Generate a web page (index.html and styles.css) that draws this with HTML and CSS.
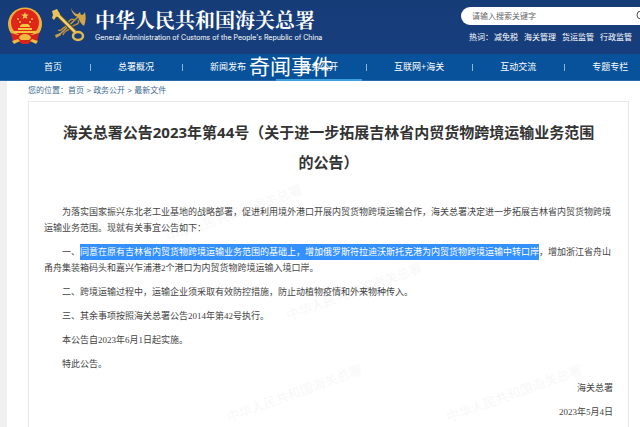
FILE: index.html
```html
<!DOCTYPE html>
<html lang="zh-CN">
<head>
    <meta charset="UTF-8">
    <meta name="viewport" content="width=device-width, initial-scale=1.0">
    <title>海关总署公告2023年第44号</title>
    <link rel="stylesheet" href="styles.css">
</head>
<body>
    <header class="site-header">
        <div class="masthead">
            <a class="brand" href="#">
                <!-- national emblem -->
                <svg class="emblem" viewBox="0 0 36 38" aria-hidden="true">
                    <ellipse cx="18" cy="17" rx="17" ry="16.5" fill="#e9b43c"/>
                    <ellipse cx="18" cy="15.5" rx="14" ry="13.5" fill="#e0251b"/>
                    <path d="M18 5l1 2.6h2.8l-2.2 1.7.8 2.7-2.4-1.6-2.4 1.6.8-2.7-2.2-1.7H17z" fill="#f7d048"/>
                    <g fill="#f3c63e">
                        <circle cx="11" cy="12" r="1"/>
                        <circle cx="13" cy="15" r="1"/>
                        <circle cx="23" cy="15" r="1"/>
                        <circle cx="25" cy="12" r="1"/>
                        <path d="M13 19l2-2h6l2 2v1H13zM11 21h14v2H11zM7 24h22v2H7z"/>
                    </g>
                    <path d="M4 26l7 2h14l7-2-2 9-5-1-4 3h-6l-4-3-5 1z" fill="#d8231a"/>
                    <path d="M12 31a6 4 0 0 1 12 0l-2 2h-8zM5 34l6-2 2 2-6 3zM31 34l-6-2-2 2 6 3z" fill="#eebc3f"/>
                </svg>
                <!-- key and caduceus -->
                <svg class="customs-mark" viewBox="0 0 36 36" aria-hidden="true">
                    <path d="M28 8L7 28" stroke="#c9a045" stroke-width="1.5"/>
                    <path d="M24 12c-7-3-6 5-10 7s-4 5-7 3M27 12c3 5-5 4-8 8s-6 2-7 7" fill="none" stroke="#b98c35" stroke-width="1.5"/>
                    <path d="M20 0c1 5 3 8 7 9 1 3 3 7 6 9 2-5 2-9 1-14-1 2-2 3-4 3l-1-3-2 2c-3 0-5-2-7-6z" fill="#d2a548"/>
                    <path d="M4 27l5-2 1 2-5 3z" fill="#c9a045"/>
                    <path d="M5 5l19 19" stroke="#5e4b1e" stroke-width="5"/>
                    <path d="M4 4l20 20" stroke="#efd277" stroke-width="2.5"/>
                    <path d="M1 3l5-2 3 5-1 2-3 1-2 3-2-2 1-3z" fill="#e8c55c"/>
                    <ellipse cx="27" cy="28" rx="5" ry="4" fill="none" stroke="#e0b84e" stroke-width="2.5"/>
                </svg>
                <span class="brand-text">
                    <span class="brand-name">中华人民共和国海关总署</span>
                    <span class="brand-english">General Administration of Customs of the People's Republic of China</span>
                </span>
            </a>
            <form class="search">
                <div class="search-box">
                    <input class="search-input" type="text" aria-label="搜索" placeholder="请输入搜索关键字">
                    <button class="search-btn" type="button" aria-label="搜索">
                        <svg viewBox="0 0 12 12"><circle cx="5" cy="5" r="4"/><path d="M8 8l3 3"/></svg>
                    </button>
                </div>
                <div class="hot-words">
                    <span class="hot-label">热词&#xFF1A;</span>
                    <a href="#">减免税</a>
                    <a href="#">海关管理</a>
                    <a href="#">货运监管</a>
                    <a href="#">行政监管</a>
                </div>
            </form>
        </div>
        <nav class="main-nav">
            <a href="#">首页</a>
            <a href="#">总署概况</a>
            <a href="#">新闻发布</a>
            <a class="active" href="#">政务公开<span class="caption">奇闻事件</span></a>
            <a href="#">互联网+海关</a>
            <a href="#">互动交流</a>
            <a href="#">专题专栏</a>
        </nav>
    </header>

    <main class="page">
        <div class="breadcrumb">您的位置&#xFF1A;<a href="#">首页</a> &gt; <a href="#">政务公开</a> &gt; <a href="#">最新文件</a></div>

        <article class="notice">
            <h1 class="notice-title">海关总署公告2023年第44号&#xFF08;关于进一步拓展吉林省内贸货物跨境运输业务范围的公告&#xFF09;</h1>
            <div class="notice-body">
                <p>为落实国家振兴东北老工业基地的战略部署&#xFF0C;促进利用境外港口开展内贸货物跨境运输合作&#xFF0C;海关总署决定进一步拓展吉林省内贸货物跨境运输业务范围。现就有关事宜公告如下&#xFF1A;</p>
                <p>一、<mark>同意在原有吉林省内贸货物跨境运输业务范围的基础上&#xFF0C;增加俄罗斯符拉迪沃斯托克港为内贸货物跨境运输中转口岸</mark>&#xFF0C;增加浙江省舟山甬舟集装箱码头和嘉兴乍浦港2个港口为内贸货物跨境运输入境口岸。</p>
                <p>二、跨境运输过程中&#xFF0C;运输企业须采取有效防控措施&#xFF0C;防止动植物疫情和外来物种传入。</p>
                <p>三、其余事项按照海关总署公告2014年第42号执行。</p>
                <p>本公告自2023年6月1日起实施。</p>
                <p>特此公告。</p>
                <p class="sign">海关总署</p>
                <p class="sign">2023年5月4日</p>
            </div>
            <span class="watermark wm-1" aria-hidden="true">中华人民共和国海关总署</span>
            <span class="watermark wm-2" aria-hidden="true">中华人民共和国海关总署</span>
            <span class="watermark wm-3" aria-hidden="true">中华人民共和国海关总署</span>
            <span class="watermark wm-4" aria-hidden="true">中华人民共和国海关总署</span>
        </article>
    </main>
</body>
</html>
```
FILE: styles.css
```css
* {
    margin: 0;
    padding: 0;
    box-sizing: border-box;
}

body {
    display: flex;
    flex-direction: column;
    min-height: 100vh;
    background: #fff;
    font-family: "Liberation Sans", "Noto Sans CJK SC", sans-serif;
    font-size: 9px;
    color: #444;
}

a {
    color: inherit;
    text-decoration: none;
}

.site-header {
    background: linear-gradient(#163c78, #18407f);
    color: #fff;
    overflow: hidden;
}

.masthead {
    display: flex;
    justify-content: space-between;
    height: 54px;
    padding-left: 7px;
}

.brand {
    display: flex;
    align-items: flex-start;
    padding-top: 7px;
}

.emblem {
    width: 36px;
    height: 38px;
}

.customs-mark {
    width: 36px;
    height: 36px;
    margin: 1px 8px 0;
}

.brand-text {
    display: flex;
    flex-direction: column;
    white-space: nowrap;
}

.brand-name {
    font-family: "Noto Serif CJK SC", "Noto Sans CJK SC", serif;
    font-size: 20px;
    font-weight: bold;
    line-height: 26px;
}

.brand-english {
    font-family: Inter, "Liberation Sans", sans-serif;
    font-size: 7px;
    line-height: 10px;
}

.search {
    flex: none;
    width: 179px;
    padding-top: 7px;
}

.search-box {
    display: flex;
    align-items: center;
    height: 18px;
    margin-right: -12px;
    padding-left: 11px;
    background: #fff;
    border-radius: 9px;
}

.search-input {
    flex: 1;
    min-width: 0;
    border: 0;
    outline: 0;
    background: none;
    font: inherit;
    font-size: 8px;
}

.search-input::placeholder {
    color: #666;
}

.search-btn {
    width: 16px;
    height: 12px;
    border: 0;
    background: none;
}

.search-btn svg {
    display: block;
    width: 12px;
    height: 12px;
    fill: none;
    stroke: #555;
}

.hot-words {
    display: flex;
    gap: 6px;
    margin-top: 7px;
    padding-left: 8px;
    font-size: 8px;
    line-height: 12px;
    white-space: nowrap;
}

.hot-label {
    width: 19px;
}

.main-nav {
    display: flex;
    height: 27px;
    padding-left: 16px;
    background: #07529a;
    border-bottom: 1px solid #2a6cab;
}

.main-nav a {
    position: relative;
    padding: 0 28px;
    line-height: 26px;
    white-space: nowrap;
}

.main-nav a + a::before {
    content: "";
    position: absolute;
    left: 0;
    top: 10px;
    width: 1px;
    height: 7px;
    background: #8fb4d8;
}

.main-nav .active::before {
    display: none;
}

.main-nav .active::after {
    content: "";
    position: absolute;
    left: 2px;
    right: 4px;
    bottom: -1px;
    height: 2px;
    background: #3fa0e0;
}

/* large caption laid over the active tab */
.caption {
    position: absolute;
    left: -25px;
    top: 0;
    font-size: 21px;
}

.page {
    display: flex;
    flex-direction: column;
    flex: 1;
    padding: 0 11px 0 21px;
    border-left: 7px solid #f0f0f0;
}

.breadcrumb {
    padding: 4px 0;
    font-size: 8px;
    line-height: 12px;
    color: #3c6a91;
}

.notice {
    position: relative;
    z-index: 0;
    flex: 1;
    overflow: hidden;
    border: 1px solid #e8e8e8;
    border-bottom: 0;
    padding: 15px 15px 0;
}

.notice-title {
    padding: 0 14px;
    font-family: "Open Sans", "Noto Sans CJK SC", sans-serif;
    font-size: 15px;
    line-height: 30px;
    text-align: center;
    color: #333;
}

.notice-body {
    margin-top: 27px;
    font-family: "Liberation Serif", "Noto Sans CJK SC", serif;
    line-height: 16px;
}

.notice-body p {
    margin-bottom: 8px;
    text-indent: 2em;
}

.notice-body p:last-child {
    margin-bottom: 0;
}

.notice-body mark {
    padding: 3px 0;
    background: #3390ff;
    color: #fff;
}

.notice-body .sign {
    text-align: right;
}

/* faint diagonal marks behind the text */
.watermark {
    position: absolute;
    z-index: -1;
    font-size: 13px;
    line-height: 16px;
    color: #f8f8f8;
    white-space: nowrap;
    transform: rotate(-20deg);
}

.wm-1 {
    left: 134px;
    top: 104px;
}

.wm-2 {
    left: 254px;
    top: 182px;
}

.wm-3 {
    left: 194px;
    top: 284px;
}

.wm-4 {
    left: 414px;
    top: 284px;
}
```
